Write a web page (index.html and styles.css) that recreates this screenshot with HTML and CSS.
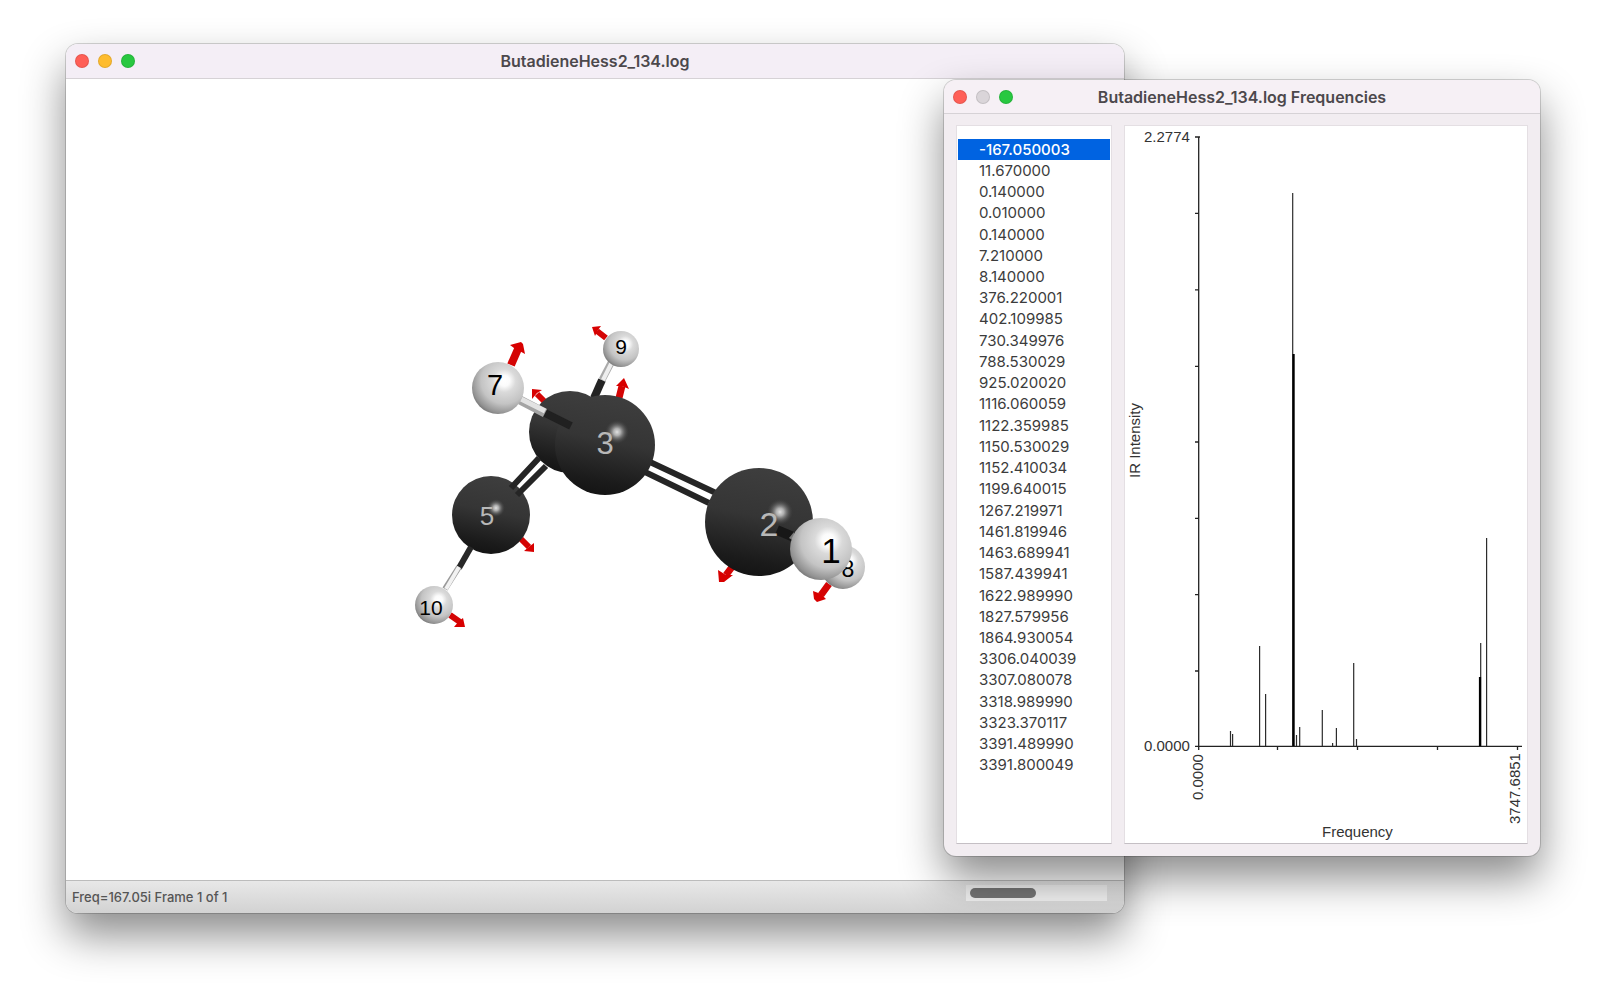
FILE: index.html
```html
<!DOCTYPE html>
<html lang="en">
<head>
<meta charset="utf-8">
<meta name="viewport" content="width=device-width, initial-scale=1">
<title>ButadieneHess2_134.log</title>
<link rel="stylesheet" href="styles.css">
</head>
<body>
<main class="desktop">
  <section class="window window-model" aria-labelledby="model-title">
    <header class="titlebar">
      <div class="lights">
        <button class="light close" aria-label="Close"></button>
        <button class="light minimize" aria-label="Minimize"></button>
        <button class="light zoom" aria-label="Zoom"></button>
      </div>
      <h1 class="title" id="model-title">ButadieneHess2_134.log</h1>
    </header>
    <div class="viewport">
      <svg class="molecule" viewBox="66 79 1058 801" role="img" aria-label="Butadiene vibration">
        <defs>
          <linearGradient id="carbon" x1="0.6" y1="0" x2="0.4" y2="1">
            <stop offset="0" stop-color="#3e3e3e"/><stop offset="0.45" stop-color="#353535"/><stop offset="0.85" stop-color="#1b1b1b"/><stop offset="1" stop-color="#141414"/>
          </linearGradient>
          <radialGradient id="glint">
            <stop offset="0" stop-color="#e2e2e2"/><stop offset="0.3" stop-color="#bbb" stop-opacity="0.9"/><stop offset="0.65" stop-color="#777" stop-opacity="0.5"/><stop offset="1" stop-color="#444" stop-opacity="0"/>
          </radialGradient>
          <radialGradient id="hydrogen" cx="0.62" cy="0.36" r="0.74">
            <stop offset="0" stop-color="#fff"/><stop offset="0.14" stop-color="#fbfbfb"/><stop offset="0.3" stop-color="#dadada"/><stop offset="0.6" stop-color="#c4c4c4"/><stop offset="0.85" stop-color="#929292"/><stop offset="1" stop-color="#606060"/>
          </radialGradient>
        </defs>
        <g class="arrow">
          <path d="M606 338L597 331M545 402L537 394M521 539L529 547M450 615L460 622" stroke-width="6"/>
          <path d="M619 398L622 386M732 567L726 575M829 584L821 595" stroke-width="7"/>
          <path d="M511 365L518 349" stroke-width="8"/>
          <path class="head" d="M592 327L601 326L598 330L595 336ZM532 389L542 390L537 393L532 399ZM534 552L534 543L530 546L524 551ZM465 627L463 618L459 621L454 627ZM624 378L616 386L622 386L629 389ZM718 570L719 582L724 582L733 575L726 575ZM813 591L814 599L817 602L826 599L821 594ZM521 342L510 345L514 348L525 354L523 344Z"/>
        </g>
        <g class="bond">
          <path d="M594 398L602 380" stroke="#242424" stroke-width="8"/>
          <path d="M602 380L612 361" stroke="#aaa" stroke-width="7"/>
          <path d="M603 380L612 362" stroke="#eee" stroke-width="4"/>
        </g>
        <circle cx="570" cy="432" r="41" fill="url(#carbon)"/>
        <circle cx="491" cy="515" r="39" fill="url(#carbon)"/>
        <circle cx="496" cy="508" r="9" fill="url(#glint)"/>
        <g class="bond" stroke="#252525" stroke-width="6">
          <path d="M539 458L511 488M546 466L517 495M650 462L716 493M645 472L709 503"/>
        </g>
        <circle cx="605" cy="445" r="50" fill="url(#carbon)"/>
        <circle cx="617" cy="432" r="12" fill="url(#glint)"/>
        <g class="bond">
          <path d="M545 413L571 426" stroke="#202020" stroke-width="8"/>
          <path d="M520 400L545 413" stroke="#a4a4a4" stroke-width="9"/>
          <path d="M521 399L545 411" stroke="#e2e2e2" stroke-width="5"/>
          <path d="M471 547L459 568" stroke="#282828" stroke-width="6"/>
          <path d="M459 567L445 589" stroke="#999" stroke-width="6"/>
          <path d="M459 567L446 589" stroke="#f2f2f2" stroke-width="4"/>
        </g>
        <circle cx="498" cy="388" r="26" fill="url(#hydrogen)"/>
        <circle cx="621" cy="349" r="18" fill="url(#hydrogen)"/>
        <circle cx="434" cy="605" r="19" fill="url(#hydrogen)"/>
        <circle cx="759" cy="522" r="54" fill="url(#carbon)"/>
        <circle cx="780" cy="512" r="13" fill="url(#glint)"/>
        <path d="M777 530L796 538" stroke="#171717" stroke-width="10"/>
        <circle cx="843" cy="567" r="22" fill="url(#hydrogen)"/>
        <text class="atom" x="848" y="577" font-size="23">8</text>
        <path d="M789 538L794 532L794 541Z" fill="#777"/>
        <circle cx="821" cy="549" r="31" fill="url(#hydrogen)"/>
        <text class="atom" x="495" y="395" font-size="29">7</text>
        <text class="atom" x="621" y="354" font-size="21">9</text>
        <text class="atom" x="431" y="615" font-size="21">10</text>
        <text class="atom" x="831" y="563" font-size="35">1</text>
        <text class="atom pale" x="605" y="454" font-size="31">3</text>
        <text class="atom pale" x="487" y="525" font-size="26">5</text>
        <text class="atom pale" x="769" y="536" font-size="34">2</text>
      </svg>
    </div>
    <footer class="statusbar">
      <span>Freq=167.05i Frame 1 of 1</span>
      <input class="scroller" type="range" min="0" max="100" value="0" aria-label="Animation frame">
    </footer>
  </section>

  <section class="window window-freq" aria-labelledby="freq-title">
    <header class="titlebar">
      <div class="lights">
        <button class="light close" aria-label="Close"></button>
        <button class="light disabled" aria-label="Minimize" disabled></button>
        <button class="light zoom" aria-label="Zoom"></button>
      </div>
      <h2 class="title" id="freq-title">ButadieneHess2_134.log Frequencies</h2>
    </header>
    <div class="panes">
      <ul class="pane freq-list" aria-label="Frequencies">
        <li><button class="freq selected" aria-pressed="true">-167.050003</button></li>
        <li><button class="freq">11.670000</button></li>
        <li><button class="freq">0.140000</button></li>
        <li><button class="freq">0.010000</button></li>
        <li><button class="freq">0.140000</button></li>
        <li><button class="freq">7.210000</button></li>
        <li><button class="freq">8.140000</button></li>
        <li><button class="freq">376.220001</button></li>
        <li><button class="freq">402.109985</button></li>
        <li><button class="freq">730.349976</button></li>
        <li><button class="freq">788.530029</button></li>
        <li><button class="freq">925.020020</button></li>
        <li><button class="freq">1116.060059</button></li>
        <li><button class="freq">1122.359985</button></li>
        <li><button class="freq">1150.530029</button></li>
        <li><button class="freq">1152.410034</button></li>
        <li><button class="freq">1199.640015</button></li>
        <li><button class="freq">1267.219971</button></li>
        <li><button class="freq">1461.819946</button></li>
        <li><button class="freq">1463.689941</button></li>
        <li><button class="freq">1587.439941</button></li>
        <li><button class="freq">1622.989990</button></li>
        <li><button class="freq">1827.579956</button></li>
        <li><button class="freq">1864.930054</button></li>
        <li><button class="freq">3306.040039</button></li>
        <li><button class="freq">3307.080078</button></li>
        <li><button class="freq">3318.989990</button></li>
        <li><button class="freq">3323.370117</button></li>
        <li><button class="freq">3391.489990</button></li>
        <li><button class="freq">3391.800049</button></li>
      </ul>
      <div class="pane chart-pane">
        <svg class="chart" viewBox="1125 126 402 717" role="img" aria-label="IR intensity by frequency">
          <g class="axis">
            <path d="M1198.7 137V750M1195 746.3H1522"/>
            <path d="M1195 137H1200M1195 213.3H1199M1195 289.8H1199M1195 366.3H1199M1195 442H1199M1195 518.3H1199M1195 594.6H1199M1195 671H1199"/>
            <path d="M1277.5 746V750M1357.5 746V750M1437.5 746V750M1517.5 746V750"/>
          </g>
          <g class="peaks">
            <path d="M1230.5 746V731M1232.6 746V734M1259.6 746V646M1265.6 746V694M1292.7 746V193M1296.5 746V735M1299.7 746V727M1322.3 746V710M1332.6 746V743M1336.4 746V728M1353.7 746V663M1356.5 746V739M1480.7 746V643M1486.6 746V538"/>
            <path class="merged" d="M1293.6 746V354M1480 746V677"/>
          </g>
          <g class="labels">
            <text x="1144" y="142">2.2774</text>
            <text x="1144" y="751">0.0000</text>
            <text transform="translate(1203 800) rotate(-90)">0.0000</text>
            <text transform="translate(1520 824) rotate(-90)">3747.6851</text>
            <text transform="translate(1140 478) rotate(-90)">IR Intensity</text>
            <text x="1322" y="837">Frequency</text>
          </g>
        </svg>
      </div>
    </div>
  </section>
</main>
</body>
</html>
```
FILE: styles.css
```css
* { box-sizing: border-box; }

body {
  margin: 0;
  background: #fff;
  color: #3c3c3c;
  font-family: Inter, "Liberation Sans", sans-serif;
}

button { border: 0; padding: 0; font: inherit; color: inherit; }

.desktop {
  position: relative;
  height: 100vh;
  overflow: hidden;
}

.window {
  position: absolute;
  display: flex;
  flex-direction: column;
  border-radius: 12px;
  overflow: hidden;
}

.window-model {
  inset: 44px 482px 87px 66px;
  background: #fff;
  box-shadow: 0 0 0 1px rgba(0, 0, 0, 0.16), 0 22px 44px rgba(0, 0, 0, 0.46);
}

.window-freq {
  inset: 80px 66px 144px 944px;
  background: #f2edf1;
  box-shadow: 0 0 0 1px rgba(0, 0, 0, 0.16), 0 22px 44px rgba(0, 0, 0, 0.46);
}

.titlebar {
  flex: none;
  display: grid;
  grid-template-columns: 72px 1fr 72px;
  align-items: center;
  height: 34px;
  border-bottom: 1px solid #d6d2d6;
  background: #f4eef6;
}

.window-model .titlebar { height: 35px; padding-bottom: 1px; }
.window-freq .titlebar { background: #f6f0f5; }

.lights { display: flex; gap: 9px; padding-left: 9px; }

.light {
  width: 14px;
  height: 14px;
  border: 1px solid rgba(0, 0, 0, 0.1);
  border-radius: 50%;
}

.close { background: #ff5f57; }
.minimize { background: #febc2e; }
.zoom { background: #28c840; }
.disabled { background: #dad5d9; }

.title {
  margin: 0;
  font-size: 16px;
  font-weight: 600;
  line-height: 20px;
  text-align: center;
  white-space: nowrap;
  color: #4c484c;
}

.viewport { flex: 1; min-height: 0; }
.molecule { display: block; width: 100%; height: 100%; }
.arrow { fill: none; stroke: #d40404; }
.arrow .head { fill: #d80000; stroke: none; }
.bond { fill: none; }
.atom { font-family: "Liberation Sans", Arial, sans-serif; text-anchor: middle; fill: #000; }
.pale { fill: #b8b8b8; }

.statusbar {
  flex: none;
  display: flex;
  justify-content: space-between;
  align-items: flex-start;
  height: 33px;
  padding: 4px 17px 0 6px;
  border-top: 1px solid #bcbcbc;
  background: linear-gradient(#e8e8e8, #d2d2d2);
  font-size: 13px;
  font-weight: 500;
  line-height: 24px;
  color: #555;
}

.scroller {
  appearance: none;
  width: 141px;
  height: 16px;
  margin: 0;
  padding: 0 4px;
  background: #f2f2f2;
}

.scroller::-webkit-slider-thumb {
  appearance: none;
  width: 66px;
  height: 10px;
  border-radius: 5px;
  background: #767676;
}

.panes {
  flex: 1;
  display: grid;
  grid-template-columns: 156px 1fr;
  gap: 12px;
  min-height: 0;
  padding: 11px 12px 12px;
}

.pane {
  min-height: 0;
  border: 1px solid #e4dfe3;
  border-bottom-color: #c4bfc4;
  background: #fff;
}

.freq-list {
  display: flex;
  flex-direction: column;
  margin: 0;
  padding: 13px 1px 67px;
  list-style: none;
}

.freq-list li { flex: 1; display: flex; min-height: 0; }

.freq {
  flex: 1;
  padding: 0 21px;
  background: none;
  font-size: 15px;
  line-height: 20px;
  text-align: left;
}

.selected { background: #0063e1; color: #fff; font-weight: 500; }

.chart { display: block; width: 100%; height: 100%; }
.axis { fill: none; stroke: #222; stroke-width: 1.3px; }
.peaks { fill: none; stroke: #2c2c2c; stroke-width: 1.2px; }
.merged { stroke: #000; stroke-width: 2.2px; }
.labels { font-family: "Liberation Sans", Arial, sans-serif; font-size: 15px; fill: #333; }
```
